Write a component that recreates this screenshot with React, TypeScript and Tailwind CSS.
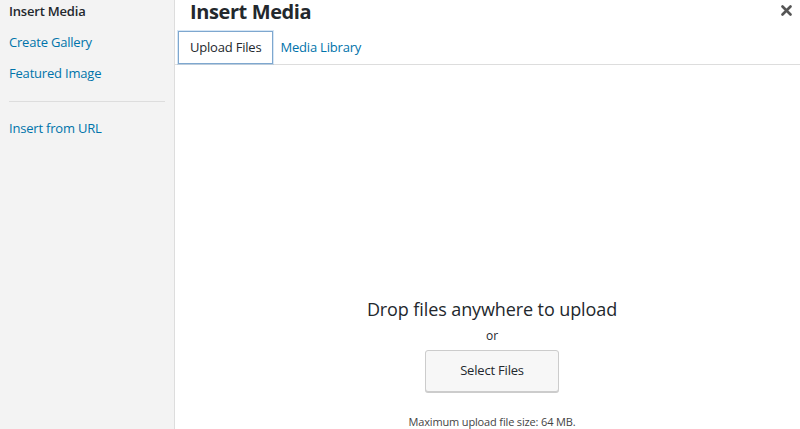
export default function App() {
  const font = { fontFamily: '"Open Sans", "Noto Sans", sans-serif' }

  return (
    <div className="flex h-[429px] w-[800px] overflow-hidden bg-white text-[#23282d]" style={font}>
      <aside className="w-[175px] shrink-0 border-r border-[#dddddd] bg-[#f3f3f3]">
        <ul className="-mt-[4px] text-[13px] tracking-[-0.2px]">
          <li className="flex h-[31px] items-center px-[9px] font-semibold text-[#23282d]">Insert Media</li>
          <li className="flex h-[31px] items-center px-[9px] text-[#0073aa]">Create Gallery</li>
          <li className="flex h-[31px] items-center px-[9px] text-[#0073aa]">Featured Image</li>
        </ul>
        <div className="mx-[9px] mt-[12px] h-px bg-[#dddddd]" />
        <div className="mt-[11px] flex h-[31px] items-center px-[9px] text-[13px] tracking-[-0.2px] text-[#0073aa]">
          Insert from URL
        </div>
      </aside>

      <main className="relative flex min-w-0 flex-1 flex-col">
        <div className="flex h-[31px] shrink-0 items-start justify-between pl-[15px] pr-[8px]">
          <h1 className="pt-px text-[20px] font-bold leading-[22px] tracking-[-0.4px]">Insert Media</h1>
          <svg className="mt-[5px]" width="11" height="11" viewBox="0 0 11 11">
            <path d="M1.5 1.5 L9.5 9.5 M9.5 1.5 L1.5 9.5" stroke="#555" strokeWidth="2.6" strokeLinecap="round" />
          </svg>
        </div>

        <div className="flex h-[34px] shrink-0 items-stretch border-b border-[#dddddd] pl-[3px] text-[13px] tracking-[-0.2px]">
          <div className="flex items-center border border-[#7ea7cf] px-[11px] shadow-[0_0_0_1px_rgba(91,157,217,0.25)]">
            Upload Files
          </div>
          <div className="flex items-center px-[7px] text-[#0073aa]">Media Library</div>
        </div>

        <div className="flex shrink-0 flex-col items-center pl-[9px] pt-[230px]">
          <p className="text-[18px] leading-[28px] tracking-[-0.1px] text-[#23282d]">Drop files anywhere to upload</p>
          <p className="mt-[4px] text-[12px] leading-[18px] text-[#23282d]">or</p>
          <button className="mt-[5px] h-[42px] w-[134px] rounded-[3px] border border-[#cccccc] bg-[#f7f7f7] text-[13px] tracking-[-0.2px] text-[#23282d] shadow-[0_1px_0_#cccccc]">
            Select Files
          </button>
          <p className="mt-[22px] text-[11px] leading-[16px] tracking-[-0.15px] text-[#444]">Maximum upload file size: 64 MB.</p>
        </div>
      </main>
    </div>
  )
}
